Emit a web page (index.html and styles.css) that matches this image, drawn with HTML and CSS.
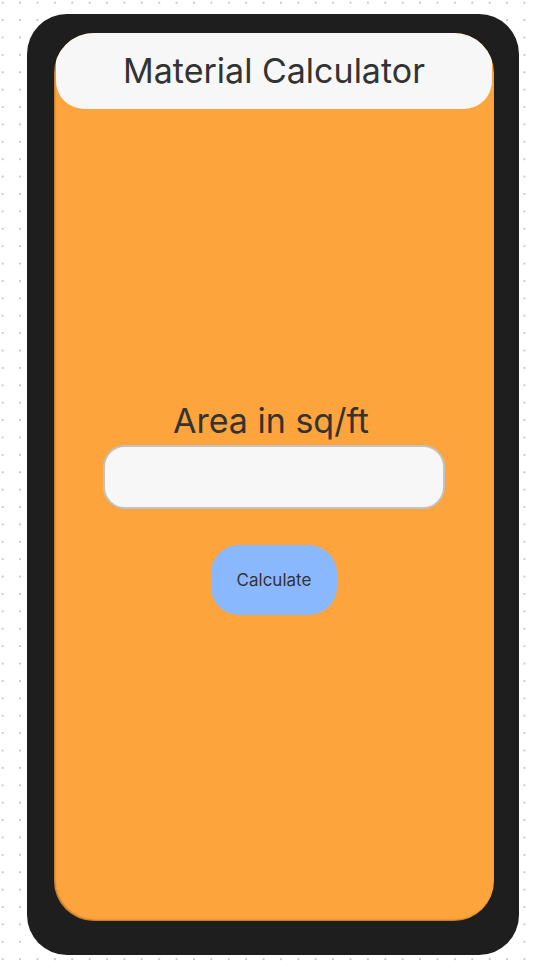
FILE: index.html
```html
<!DOCTYPE html>
<html lang="en">
<head>
<meta charset="utf-8">
<title>Material Calculator</title>
<link rel="stylesheet" href="styles.css">
</head>
<body>
<div class="phone">
  <div class="screen">
    <header class="app-header">
      <h1 class="app-title">Material Calculator</h1>
    </header>
    <main class="content">
      <label class="field-label" for="area">Area in sq/ft</label>
      <input class="field-input" id="area" type="text">
      <button class="calc-btn" type="button">Calculate</button>
    </main>
  </div>
</div>
</body>
</html>
```
FILE: styles.css
```css
html, body {
  margin: 0;
  padding: 0;
}
body {
  width: 534px;
  height: 974px;
  background-color: #ffffff;
  background-image: radial-gradient(circle, #c9c9c9 0.9px, transparent 1.4px);
  background-size: 17.4px 17.4px;
  background-position: -6px -6px;
  font-family: Inter, "Noto Sans", sans-serif;
  overflow: hidden;
}
.phone {
  box-sizing: border-box;
  margin: 14px 0 0 27px;
  width: 492px;
  height: 941px;
  padding: 19px 25px 34px 27px;
  background: #1e1e1e;
  border-radius: 40px;
}
.screen {
  box-sizing: border-box;
  width: 440px;
  height: 888px;
  background: #fea43c;
  border-radius: 40px;
  box-shadow: inset 1px -1px 2px rgba(0, 0, 0, 0.3);
  display: flex;
  flex-direction: column;
  align-items: center;
  overflow: hidden;
}
.app-header {
  box-sizing: border-box;
  width: 436px;
  height: 76px;
  margin: 0 2px;
  background: #f7f7f7;
  border-radius: 28px;
  display: flex;
  align-items: center;
  justify-content: center;
}
.app-title {
  margin: 0;
  font-size: 34px;
  font-weight: 400;
  color: #333333;
  line-height: 40px;
}
.content {
  display: flex;
  flex-direction: column;
  align-items: center;
  padding-top: 291px;
}
.field-label {
  font-size: 34px;
  color: #333333;
  line-height: 41px;
  margin-right: 6px;
}
.field-input {
  box-sizing: border-box;
  margin-top: 4px;
  width: 342px;
  height: 64px;
  background: #f7f7f7;
  border: 2px solid #c2c2c2;
  border-radius: 22px;
  outline: none;
  font-family: inherit;
  font-size: 18px;
  padding: 0 16px;
}
.calc-btn {
  margin-top: 36px;
  width: 126px;
  height: 70px;
  background: #8ab8ff;
  border: none;
  border-radius: 28px;
  font-family: inherit;
  font-size: 17px;
  color: #333333;
  padding: 0;
}
```
